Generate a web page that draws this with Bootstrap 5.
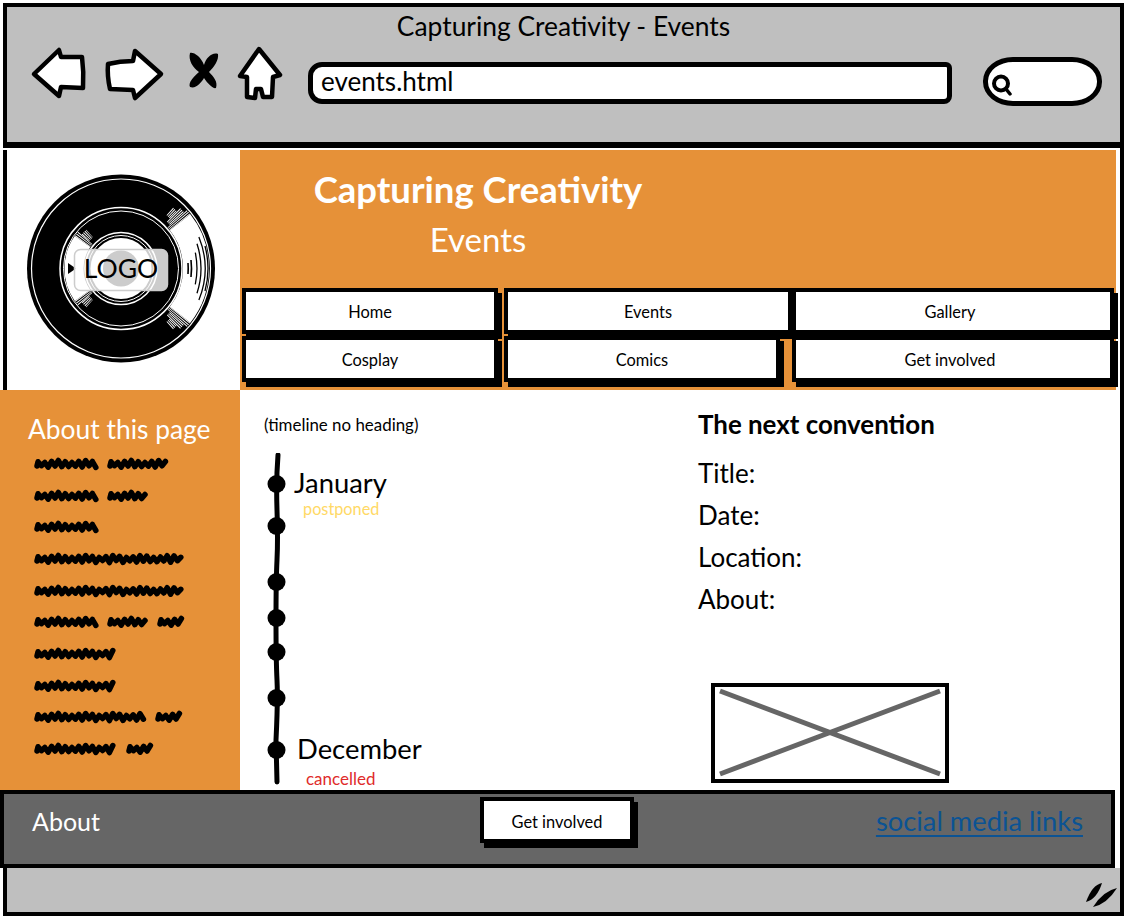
<!doctype html>
<html lang="en">
<head>
    <meta charset="utf-8">
    <meta name="viewport" content="width=device-width, initial-scale=1">
    <title>Capturing Creativity - Events</title>
    <link href="https://cdn.jsdelivr.net/npm/bootstrap@5.3.3/dist/css/bootstrap.min.css" rel="stylesheet">
    <style>
        body { width: 1128px; height: 920px; overflow: hidden; background: #fff; color: #000; font-family: "Lato", "Noto Sans", sans-serif; }
        .shell { width: 1124px; }

        .chrome { height: 145px; margin: 3px 0 0 3px; background: #bfbfbf; border: solid #000; border-width: 4px 4px 6px; }
        .chrome-title { height: 33px; padding-top: 5px; line-height: 29px; font-size: 26.4px; text-align: center; }
        .toolbar { padding-left: 13px; }
        .urlbar { width: 644px; height: 42px; margin: 22px 0 0 8px; padding-left: 8px; background: #fff; border: 5px solid #000; border-radius: 14px 6px 8px 14px; font-size: 26px; line-height: 28px; }
        .searchbox { width: 119px; height: 49px; margin: 17px 0 0 31px; padding-left: 2px; background: #fff; border: 5px solid #000; border-radius: 30px / 24px; }

        .head-row { display: grid; grid-template-columns: 240px 1fr; height: 242px; padding: 2px 4px 0 0; background: #fff; border-right: 4px solid #000; }
        .logo-cell { margin-left: 3px; padding: 20px 0 0 14px; border-left: 4px solid #000; }
        .banner { background: #e69138; color: #fff; padding-bottom: 8px; }
        .banner-text { width: 476px; text-align: center; }
        .banner-title { margin: 17px 0 0; font-size: 36.5px; line-height: 45px; font-weight: 700; }
        .banner-sub { margin: 7px 0 0; font-size: 33px; line-height: 40px; font-weight: 400; }
        .nav-grid { display: grid; grid-template-columns: 262px 288px 322px; row-gap: 2px; padding-left: 2px; }
        .sketch-btn { height: 46px; padding: 0; background: #fff; color: #000; border: 4px solid #000; border-radius: 0; box-shadow: 4px 5px 0 #000; font-size: 16.4px; line-height: 39px; }
        .sketch-btn:hover { background: #fff; color: #000; border-color: #000; }
        .nav-first { margin-right: 6px; }
        .nav-short { margin-right: 12px; }
        .nav-last { padding-right: 6px; }

        .body-row { display: grid; grid-template-columns: 240px 1fr; height: 400px; }
        .side-col { background: #e69138; padding: 23px 0 0 28px; color: #fff; }
        .side-title { margin: 0 0 3px; font-size: 26.4px; line-height: 32px; font-weight: 400; }
        .scrib-line { height: 31.7px; padding-left: 6px; gap: 8px; }
        .main-col { padding: 23px 0 0 24px; background: #fff; border-right: 4px solid #000; }
        .timeline-col { width: 434px; }
        .small-head { margin: 0 0 17px; padding-top: 1px; font-size: 16.9px; line-height: 22px; font-weight: 400; }
        .timeline { height: 335px; }
        .month { font-size: 27.4px; line-height: 28px; }
        .tag-postponed { margin: 3px 0 0 9px; color: #ffd966; font-size: 16.3px; line-height: 18px; }
        .tag-cancelled { margin: 7px 0 0 12px; color: #e02b2b; font-size: 17px; line-height: 18px; }
        .month-last { margin-left: 3px; }
        .next-head { margin: 0 0 17px; font-size: 25.9px; line-height: 22px; font-weight: 700; }
        .next-item { font-size: 26px; line-height: 42px; }
        .picture-box { width: 238px; height: 100px; margin: 63px 0 0 13px; border: 4px solid #000; }

        .foot-row { display: grid; height: 78px; background: #fff; border-right: 4px solid #000; }
        .foot-bar { display: grid; grid-template-columns: 476px 1fr; width: 1115px; height: 78px; padding-top: 3px; background: #666; border: 4px solid #000; }
        .foot-about { padding-left: 28px; color: #fff; font-size: 25px; line-height: 48px; }
        .foot-btn { width: 154px; line-height: 42px; }
        .foot-link { color: #0b5394; font-size: 27.3px; line-height: 48px; text-underline-offset: 4px; padding-right: 28px; }

        .status-bar { height: 48px; margin-left: 3px; padding: 11px 0 0; background: #bfbfbf; border: solid #000; border-width: 0 4px 4px; }
    </style>
</head>
<body>
    <div class="shell">
        <!-- browser frame -->
        <div class="chrome">
            <div class="chrome-title">Capturing Creativity - Events</div>
            <div class="toolbar d-flex align-items-start">
                <svg width="280" height="70" viewBox="0 0 280 70">
                    <g fill="#fff" stroke="#000" stroke-width="4.5" stroke-linejoin="round">
                        <path d="M14 34 L39 10 L41 17 L62 17 Q64 32 63 48 L41 47 L39 56 Z"/>
                        <path d="M88 24 Q100 21 113 21 L115 11 L141 34 L115 58 L113 50 L90 49 Q87 36 88 24 Z"/>
                        <path d="M239 9 L260 35 L253 37 L252 57 L243 57 L241 49 L236 49 L235 58 L227 57 L227 37 L220 36 Z"/>
                    </g>
                    <path d="M184 25C181 17 174 12 170 13C168 20 173 28 179 32C173 37 168 43 170 47C176 49 181 43 184 38C188 44 193 49 196 48C198 42 194 37 189 32C194 27 199 20 198 14C192 12 186 18 184 25Z"/>
                </svg>
                <div class="urlbar">events.html</div>
                <div class="searchbox d-flex align-items-center">
                    <svg width="24" height="28" viewBox="0 0 24 28" fill="none" stroke="#000">
                        <circle cx="11" cy="15.500" r="7" stroke-width="4"/>
                        <path d="M16 21 L20 26" stroke-width="3.5" stroke-linecap="round"/>
                    </svg>
                </div>
            </div>
        </div>

        <!-- header -->
        <div class="head-row">
            <div class="logo-cell">
                <svg width="200" height="200" viewBox="0 0 200 200">
                    <circle cx="100" cy="98.5" r="94"/>
                    <g fill="none" stroke="#fff">
                        <circle cx="100" cy="98.5" r="89.5" stroke-width="1.2"/>
                        <circle cx="100" cy="98.5" r="61" stroke-width="1.5"/>
                        <circle cx="100" cy="98.5" r="57.5" stroke-width="1"/>
                        <circle cx="100" cy="98.5" r="36" stroke-width="1.5"/>
                        <circle cx="100" cy="98.5" r="33" stroke-width="1"/>
                        <path d="M159.1 52.3A75 75 0 0 1 159.1 144.7" stroke-width="26"/>
                        <g stroke-dasharray="0.9 0.9">
                            <path d="M159.1 52.3A75 75 0 0 0 155.7 48.3" stroke-width="26"/>
                            <path d="M155.7 48.3A75 75 0 0 0 152.1 44.6" stroke-width="19"/>
                            <path d="M152.1 44.6A75 75 0 0 0 148.2 41" stroke-width="10"/>
                            <path d="M159.1 144.7A75 75 0 0 1 155.7 148.7" stroke-width="26"/>
                            <path d="M155.7 148.7A75 75 0 0 1 152.1 152.4" stroke-width="19"/>
                            <path d="M152.1 152.4A75 75 0 0 1 148.2 156" stroke-width="10"/>
                        </g>
                        <path d="M61.5 71.5A47 47 0 0 0 61.5 125.5" stroke-width="19"/>
                        <g stroke-dasharray="0.9 0.9">
                            <path d="M61.5 71.5A47 47 0 0 1 64.5 67.700" stroke-width="19"/>
                            <path d="M64.5 67.7A47 47 0 0 1 68.6 63.6" stroke-width="10"/>
                            <path d="M61.5 125.5A47 47 0 0 0 64.5 129.3" stroke-width="19"/>
                            <path d="M64.5 129.3A47 47 0 0 0 68.6 133.4" stroke-width="10"/>
                        </g>
                    </g>
                    <g fill="none" stroke="#000" stroke-width="1.3">
                        <path d="M174.3 82.7A76 76 0 0 1 174.3 114.3"/>
                        <path d="M176 73.8A80 80 0 0 1 176 123.2"/>
                        <path d="M177.9 67A84 84 0 0 1 177.9 130"/>
                        <path d="M184 76A87 87 0 0 1 184 121"/>
                        <path d="M167 93A68 68 0 0 1 167 104" stroke-width="1.6"/>
                        <path d="M170 90A70.500 70.500 0 0 1 170 107" stroke-width="1.6"/>
                    </g>
                    <path d="M47 93 L55 98.5 L47 104 Z"/>
                    <circle cx="100" cy="98.5" r="30.5" fill="#fff"/>
                    <rect x="53.5" y="79.5" width="93" height="41" rx="6" fill="#fff" fill-opacity=".8" stroke="#ccc" stroke-width="1.5"/>
                    <circle cx="100" cy="98.5" r="18" fill="#ccc"/>
                    <text x="100" y="108" text-anchor="middle" font-family="Lato, sans-serif" font-size="26.500">LOGO</text>
                </svg>
            </div>
            <div class="banner d-flex flex-column">
                <div class="banner-text">
                    <h1 class="banner-title">Capturing Creativity</h1>
                    <h2 class="banner-sub">Events</h2>
                </div>
                <div class="nav-grid mt-auto">
                    <a class="btn sketch-btn nav-first" href="#">Home</a>
                    <a class="btn sketch-btn" href="#">Events</a>
                    <a class="btn sketch-btn nav-last" href="#">Gallery</a>
                    <a class="btn sketch-btn nav-first" href="#">Cosplay</a>
                    <a class="btn sketch-btn nav-short" href="#">Comics</a>
                    <a class="btn sketch-btn nav-last" href="#">Get involved</a>
                </div>
            </div>
        </div>

        <!-- sidebar and content -->
        <div class="body-row">
            <div class="side-col">
                <h3 class="side-title">About this page</h3>
                <div id="scribbles"></div>
            </div>
            <div class="main-col d-flex">
                <div class="timeline-col">
                    <h4 class="small-head">(timeline no heading)</h4>
                    <div class="timeline d-flex">
                        <svg width="30" height="335" viewBox="264 453 30 335" class="flex-shrink-0">
                            <path d="M278 455 Q276 480 277 510 T277 560 T276 620 T277 680 T276 740 L277 782" fill="none" stroke="#000" stroke-width="5" stroke-linecap="round"/>
                            <g>
                                <circle cx="276.500" cy="484" r="9"/>
                                <circle cx="276.500" cy="526" r="9"/>
                                <circle cx="276.500" cy="582" r="9"/>
                                <circle cx="276.500" cy="618" r="9"/>
                                <circle cx="276.500" cy="652" r="9"/>
                                <circle cx="276.500" cy="698" r="9"/>
                                <circle cx="276.500" cy="750" r="9"/>
                            </g>
                        </svg>
                        <div class="d-flex flex-column justify-content-between pt-3">
                            <div>
                                <div class="month">January</div>
                                <div class="tag-postponed">postponed</div>
                            </div>
                            <div>
                                <div class="month month-last">December</div>
                                <div class="tag-cancelled">cancelled</div>
                            </div>
                        </div>
                    </div>
                </div>
                <div>
                    <h4 class="next-head">The next convention</h4>
                    <div class="next-item">Title:</div>
                    <div class="next-item">Date:</div>
                    <div class="next-item">Location:</div>
                    <div class="next-item">About:</div>
                    <div class="picture-box">
                        <svg class="d-block" width="230" height="92" viewBox="0 0 230 92">
                            <path d="M5 4 L225 87 M225 4 L5 87" stroke="#666" stroke-width="5"/>
                        </svg>
                    </div>
                </div>
            </div>
        </div>

        <!-- footer -->
        <div class="foot-row">
            <div class="foot-bar">
                <div class="foot-about">About</div>
                <div class="d-flex justify-content-between align-items-start">
                    <a class="btn sketch-btn foot-btn" href="#">Get involved</a>
                    <a class="foot-link" href="#">social media links</a>
                </div>
            </div>
        </div>
        <div class="status-bar d-flex justify-content-end">
            <svg width="34" height="30" viewBox="0 0 34 30">
                <path d="M16 4 Q6 6 0 23 Q11 20 16 4 Z"/>
                <path d="M31 9 Q17 12 7 28 Q21 25 31 9 Z"/>
            </svg>
        </div>
    </div>

    <script>
        // greeked text of the sidebar, one array per line, widths of the words in px
        const scribbleLines = [[65, 64], [65, 42], [65], [152], [152], [65, 42, 28], [85], [84], [113, 28], [84, 28]];
        const scribbleBox = document.getElementById('scribbles');

        function scribblePath(width) {
            let d = 'M3 10';
            for (let x = 4, i = 1; x < width - 3; x += 3.4, i++) {
                const y = i % 2 ? 5.5 + Math.sin(x * 0.7) : 10.5 + Math.cos(x * 0.5);
                d += ` L${x.toFixed(1)} ${y.toFixed(1)}`;
            }
            return d;
        }

        scribbleLines.forEach((words) => {
            const line = document.createElement('div');
            line.className = 'scrib-line d-flex align-items-center';
            line.innerHTML = words.map((w) =>
                `<svg width="${w}" height="16" viewBox="0 0 ${w} 16"><path d="${scribblePath(w)}" fill="none" stroke="#000" stroke-width="5.5" stroke-linecap="round" stroke-linejoin="round"/></svg>`
            ).join('');
            scribbleBox.appendChild(line);
        });
    </script>
    <script src="https://cdn.jsdelivr.net/npm/bootstrap@5.3.3/dist/js/bootstrap.bundle.min.js"></script>
</body>
</html>
